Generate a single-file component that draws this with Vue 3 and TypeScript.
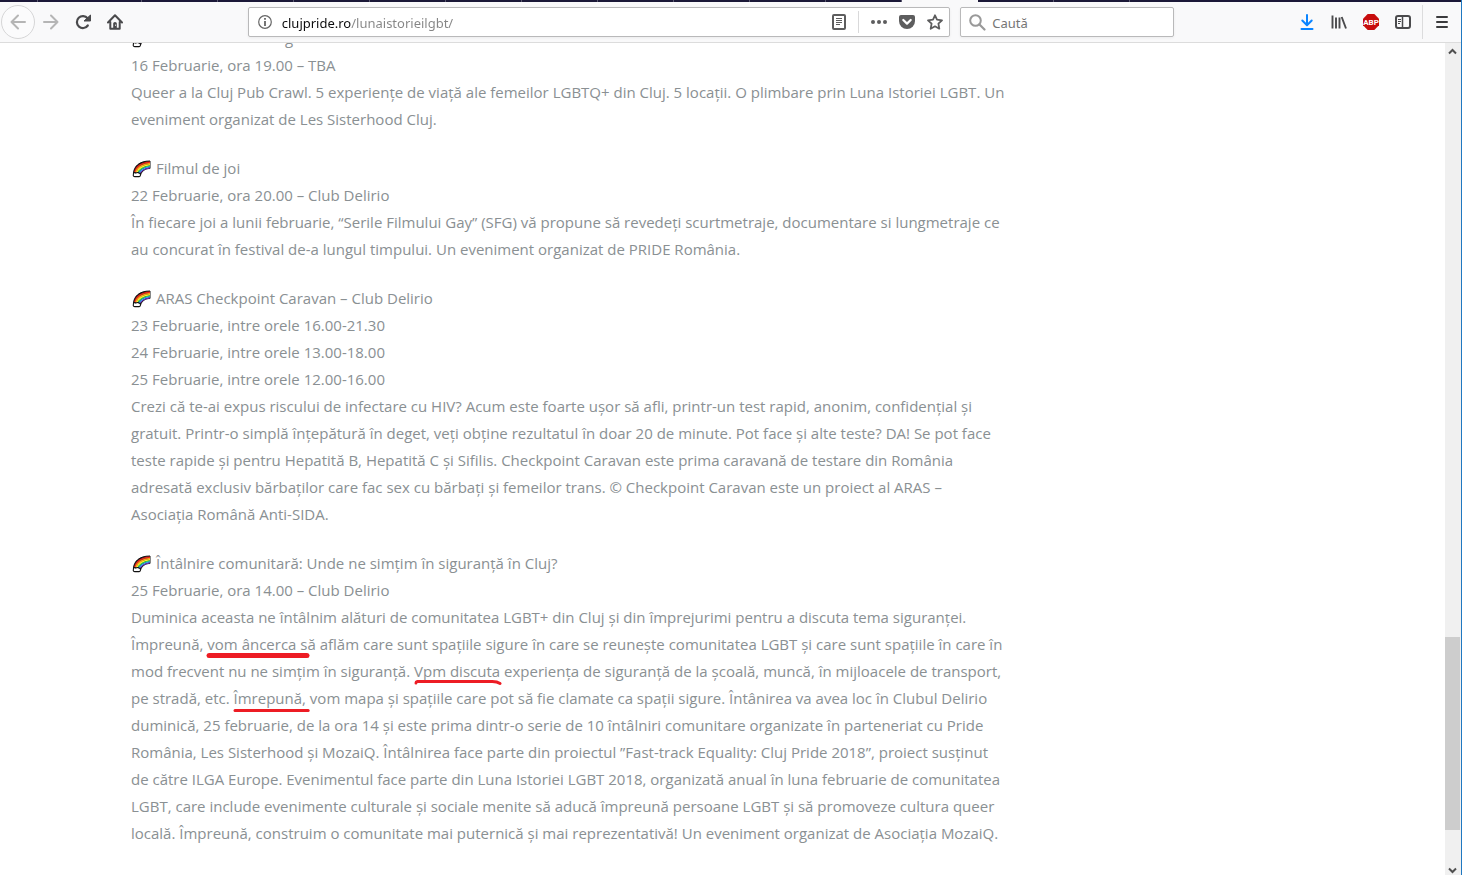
<script setup lang="ts">
import { ref } from 'vue'

interface Run {
  text: string
  mark?: 'thick' | 'hooked' | 'thin'
}
interface EventItem {
  title: string
  dates: string[]
  body: Run[]
}

const address = ref('clujpride.ro/lunaistorieilgbt/')
const query = ref('')
const tabs: number[] = Array.from({ length: 13 }, (_, i) => i)
const activeTab = 10

const events: EventItem[] = [
  {
    title: 'Filmul de joi',
    dates: ['22 Februarie, ora 20.00 – Club Delirio'],
    body: [
      {
        text: 'În fiecare joi a lunii februarie, “Serile Filmului Gay” (SFG) vă propune să revedeți scurtmetraje, documentare si lungmetraje ce au concurat în festival de-a lungul timpului. Un eveniment organizat de PRIDE România.',
      },
    ],
  },
  {
    title: 'ARAS Checkpoint Caravan – Club Delirio',
    dates: [
      '23 Februarie, intre orele 16.00-21.30',
      '24 Februarie, intre orele 13.00-18.00',
      '25 Februarie, intre orele 12.00-16.00',
    ],
    body: [
      {
        text: 'Crezi că te-ai expus riscului de infectare cu HIV? Acum este foarte ușor să afli, printr-un test rapid, anonim, confidențial și gratuit. Printr-o simplă înțepătură în deget, veți obține rezultatul în doar 20 de minute. Pot face și alte teste? DA! Se pot face teste rapide și pentru Hepatită B, Hepatită C și Sifilis. Checkpoint Caravan este prima caravană de testare din România adresată exclusiv bărbaților care fac sex cu bărbați și femeilor trans. © Checkpoint Caravan este un proiect al ARAS – Asociația Română Anti-SIDA.',
      },
    ],
  },
  {
    title: 'Întâlnire comunitară: Unde ne simțim în siguranță în Cluj?',
    dates: ['25 Februarie, ora 14.00 – Club Delirio'],
    body: [
      {
        text: 'Duminica aceasta ne întâlnim alături de comunitatea LGBT+ din Cluj și din împrejurimi pentru a discuta tema siguranței. Împreună, ',
      },
      { text: 'vom âncerca s', mark: 'thick' },
      {
        text: 'ă aflăm care sunt spațiile sigure în care se reunește comunitatea LGBT și care sunt spațiile în care în mod frecvent nu ne simțim în siguranță. ',
      },
      { text: 'Vpm discuta', mark: 'hooked' },
      { text: ' experiența de siguranță de la școală, muncă, în mijloacele de transport, pe stradă, etc. ' },
      { text: 'Îmrepună,', mark: 'thin' },
      {
        text: ' vom mapa și spațiile care pot să fie clamate ca spații sigure. Întânirea va avea loc în Clubul Delirio duminică, 25 februarie, de la ora 14 și este prima dintr-o serie de 10 întâlniri comunitare organizate în parteneriat cu Pride România, Les Sisterhood și MozaiQ. Întâlnirea face parte din proiectul ”Fast-track Equality: Cluj Pride 2018”, proiect susținut de către ILGA Europe. Evenimentul face parte din Luna Istoriei LGBT 2018, organizată anual în luna februarie de comunitatea LGBT, care include evenimente culturale și sociale menite să aducă împreună persoane LGBT și să promoveze cultura queer locală. Împreună, construim o comunitate mai puternică și mai reprezentativă! Un eveniment organizat de Asociația MozaiQ.',
      },
    ],
  },
]
</script>

<template>
  <div class="window">
    <svg class="defs" width="0" height="0" aria-hidden="true">
      <symbol id="rainbow" viewBox="0 0 20 18">
        <path d="M2.500 13C3 6.500 8 1 19 1V8.500C14 8.500 11 11 9.500 15Z" fill="#111" stroke="#111" stroke-width="1" />
        <path d="M3.800 12.500C5 7 10 2.400 19 2.200" fill="none" stroke="#e8231b" stroke-width="1.600" />
        <path d="M4.800 12.500C6 8 11 3.800 19 3.500" fill="none" stroke="#ff9a1a" stroke-width="1.500" />
        <path d="M5.800 12.700C7 9 12 5.200 19 4.700" fill="none" stroke="#fff02a" stroke-width="1.500" />
        <path d="M6.800 13C8 10 12.500 6.500 19 5.800" fill="none" stroke="#2fd05c" stroke-width="1.300" />
        <path d="M7.800 13.300C9 11 13 7.500 19 6.900" fill="none" stroke="#38a4ff" stroke-width="1.300" />
        <path d="M8.700 13.600C10 11.500 13.500 8.500 19 7.900" fill="none" stroke="#7b2fc8" stroke-width="1" />
        <path d="M2.400 14.400C2 12.800 4 12.200 4.800 13C6 12.200 8 12.600 8.400 13.300C10 13.400 9.800 16.600 8.200 16.600H4C2.500 16.600 1.900 15.600 2.400 14.400Z" fill="#fff" stroke="#111" stroke-width="1.100" />
      </symbol>
    </svg>

    <div class="tabstrip">
      <i class="tab first"></i>
      <i class="tab second"></i>
      <i v-for="t in tabs" :key="t" class="tab" :class="{ active: t === activeTab }"></i>
      <i class="tab rest"></i>
    </div>

    <header class="toolbar">
      <button class="tool back" aria-label="Înapoi">
        <svg width="16" height="16" viewBox="0 0 16 16"><path d="M15 8H1.500M8 1.500L1.500 8L8 14.500" fill="none" stroke="#b5b5b5" stroke-width="2" stroke-linecap="round" stroke-linejoin="round" /></svg>
      </button>
      <button class="tool" aria-label="Înainte">
        <svg width="16" height="16" viewBox="0 0 16 16"><path d="M1 8H14.500M8 1.500L14.500 8L8 14.500" fill="none" stroke="#b5b5b5" stroke-width="2" stroke-linecap="round" stroke-linejoin="round" /></svg>
      </button>
      <button class="tool" aria-label="Reîncarcă">
        <svg width="16" height="16" viewBox="0 0 16 16"><path d="M12.800 11.500A6 6 0 1 1 12.600 4.300" fill="none" stroke="#4a4a4c" stroke-width="2.200" stroke-linecap="round" /><path d="M15.500 1V7H9Z" fill="#4a4a4c" stroke="#4a4a4c" stroke-linejoin="round" /></svg>
      </button>
      <button class="tool" aria-label="Acasă">
        <svg width="16" height="16" viewBox="0 0 16 16"><path d="M1 8.500L8 1.300L15 8.500M3.300 8V14.800H12.700V8" fill="none" stroke="#4a4a4c" stroke-width="2" stroke-linecap="round" stroke-linejoin="round" /><path d="M6.200 14V9.500Q6.200 8 8 8T9.800 9.500V14Z" fill="#4a4a4c" /><path d="M8.300 10.500H9V12H8.300Z" fill="#fff" /></svg>
      </button>
      <span class="spacer"></span>

      <div class="field url">
        <button class="mini info" aria-label="Informații despre site">
          <svg width="14" height="14" viewBox="0 0 14 14"><circle cx="7" cy="7" r="6.300" fill="none" stroke="#666" stroke-width="1.200" /><path d="M6.100 3H7.900V4.800H6.100ZM6.100 6H7.900V11H6.100Z" fill="#666" /></svg>
        </button>
        <input v-model="address" class="address" type="text" aria-label="Adresă" spellcheck="false" />
        <button class="mini reader" aria-label="Mod citire">
          <svg width="14" height="16" viewBox="0 0 14 16"><rect x="1" y="1" width="12" height="14" rx="1" fill="none" stroke="#5d5d5e" stroke-width="2" /><path d="M4 4.500H10M4 6.500H10M4 8.500H10M4 10.500H8" stroke="#5d5d5e" stroke-width="1" /></svg>
        </button>
        <span class="rule"></span>
        <button class="mini" aria-label="Acțiuni pagină">
          <svg width="16" height="4" viewBox="0 0 16 4"><g fill="#5d5d5e"><circle cx="2" cy="2" r="2" /><circle cx="8" cy="2" r="2" /><circle cx="14" cy="2" r="2" /></g></svg>
        </button>
        <button class="mini" aria-label="Salvează în Pocket">
          <svg width="16" height="14" viewBox="0 0 16 14"><path d="M2 0H14Q16 0 16 2V6A8 8 0 0 1 0 6V2Q0 0 2 0Z" fill="#5d5d5e" /><path d="M4.300 5L8 8.600L11.700 5" fill="none" stroke="#fff" stroke-width="2.200" stroke-linecap="round" stroke-linejoin="round" /></svg>
        </button>
        <button class="mini" aria-label="Adaugă semn de carte">
          <svg width="16" height="16" viewBox="0 0 16 16"><path d="M8 1.300L10 5.700L15 6.300L11.400 9.700L12.300 14.700L8 12.300L3.700 14.700L4.600 9.700L1 6.300L6 5.700Z" fill="none" stroke="#5d5d5e" stroke-width="1.800" stroke-linejoin="round" /></svg>
        </button>
      </div>

      <label class="field search">
        <svg width="17" height="17" viewBox="0 0 17 17"><circle cx="6.500" cy="6.500" r="5.300" fill="none" stroke="#999" stroke-width="2" /><path d="M10.500 10.500L15.500 15.500" stroke="#999" stroke-width="2.200" stroke-linecap="round" /></svg>
        <input v-model="query" type="text" placeholder="Caută" aria-label="Caută" />
      </label>
      <span class="spacer"></span>

      <button class="tool" aria-label="Descărcări">
        <svg width="14" height="16" viewBox="0 0 14 16"><path d="M7 1V11M2.300 6.500L7 11.200L11.700 6.500M1.500 15H12.500" fill="none" stroke="#0a84ff" stroke-width="2" stroke-linecap="round" stroke-linejoin="round" /></svg>
      </button>
      <button class="tool" aria-label="Bibliotecă">
        <svg width="16" height="16" viewBox="0 0 16 16"><path d="M1.500 1.500V14.500M5 3.500V14.500M8.500 3.500V14.500M10.700 3L15 14.500" fill="none" stroke="#4a4a4c" stroke-width="1.900" /></svg>
      </button>
      <button class="tool" aria-label="Adblock Plus">
        <svg width="16" height="16" viewBox="0 0 16 16"><path d="M4.700 0H11.300L16 4.700V11.300L11.300 16H4.700L0 11.300V4.700Z" fill="#c70d0d" /><text x="8" y="11" text-anchor="middle" class="abp">ABP</text></svg>
      </button>
      <button class="tool" aria-label="Bară laterală">
        <svg width="16" height="14" viewBox="0 0 16 14"><rect x="1" y="1" width="14" height="12" rx="2" fill="none" stroke="#4a4a4c" stroke-width="2" /><path d="M7.500 1V13" stroke="#4a4a4c" stroke-width="1.500" /><path d="M3 4.500H6M3 6.500H6M3 8.500H5" stroke="#4a4a4c" stroke-width="1" /></svg>
      </button>
      <span class="divider"></span>
      <button class="tool menu" aria-label="Meniu">
        <svg width="12" height="12" viewBox="0 0 12 12"><path d="M1 1H11M1 6H11M1 11H11" stroke="#3b3b3d" stroke-width="2" stroke-linecap="round" /></svg>
      </button>
    </header>

    <div class="viewport">
      <main class="page">
        <section class="event">
          <h3 class="cut">
            <svg class="bow" width="20" height="18"><use href="#rainbow" /></svg>
            <span class="tail">g</span>
          </h3>
          <p>16 Februarie, ora 19.00 – TBA</p>
          <p>Queer a la Cluj Pub Crawl. 5 experiențe de viață ale femeilor LGBTQ+ din Cluj. 5 locații. O plimbare prin Luna Istoriei LGBT. Un eveniment organizat de Les Sisterhood Cluj.</p>
        </section>

        <section v-for="e in events" :key="e.title" class="event">
          <h3>
            <svg class="bow" width="20" height="18"><use href="#rainbow" /></svg>
            <span>{{ e.title }}</span>
          </h3>
          <p v-for="d in e.dates" :key="d">{{ d }}</p>
          <p>
            <template v-for="(r, i) in e.body" :key="i"><span v-if="r.mark" class="marked">{{ r.text }}<svg v-if="r.mark === 'thick'" class="stroke" viewBox="0 0 104 8" preserveAspectRatio="none"><path d="M2 3.500H104" stroke-width="5" /></svg><svg v-else-if="r.mark === 'hooked'" class="stroke" viewBox="0 0 88 8" preserveAspectRatio="none"><path d="M2 4C2 2 5 2.500 9 2.500H80Q85 2.500 88 4.500" stroke-width="3" /></svg><svg v-else class="stroke" viewBox="0 0 78 8" preserveAspectRatio="none"><path d="M1 4.500H80" stroke-width="3" /></svg></span><template v-else>{{ r.text }}</template></template>
          </p>
        </section>
      </main>

      <div class="scrollbar">
        <button aria-label="Derulează în sus">
          <svg width="9" height="7" viewBox="0 0 9 7"><path d="M1 5.500L4.500 2L8 5.500" fill="none" stroke="#505050" stroke-width="2" /></svg>
        </button>
        <div class="track"><div class="thumb"></div></div>
        <button class="down" aria-label="Derulează în jos">
          <svg width="9" height="7" viewBox="0 0 9 7"><path d="M1 1.500L4.500 5L8 1.500" fill="none" stroke="#505050" stroke-width="2" /></svg>
        </button>
      </div>
    </div>
  </div>
</template>

<style>
body {
  margin: 0;
}
</style>

<style scoped>
.window {
  box-sizing: border-box;
  height: 100vh;
  display: flex;
  flex-direction: column;
  overflow: hidden;
  border-right: 1px solid #1f78c1;
  background: #fff;
  font-family: "Open Sans", "Noto Sans", sans-serif;
}
.defs {
  position: absolute;
}
button {
  display: flex;
  align-items: center;
  justify-content: center;
  padding: 0;
  border: 0;
  background: none;
}
.tabstrip {
  flex: none;
  display: flex;
  height: 2px;
  background: #1b1838;
}
.tab {
  box-sizing: border-box;
  flex: 0 1 76px;
  border-right: 1px solid #5b5970;
}
.tab.first {
  flex-basis: 38px;
}
.tab.second {
  flex-basis: 104px;
}
.tab.active {
  background: #f9f9fa;
  border-color: #f9f9fa;
}
.tab.rest {
  flex: 1;
  border: 0;
}
.toolbar {
  flex: none;
  display: flex;
  align-items: center;
  height: 40px;
  background: #f9f9fa;
  border-bottom: 1px solid #dcdcdc;
}
.tool {
  flex: none;
  width: 32px;
  height: 32px;
}
.back {
  box-sizing: border-box;
  width: 34px;
  height: 34px;
  margin-left: 1px;
  border: 1px solid #d6d6d7;
  border-radius: 50%;
  background: #fbfbfc;
}
.spacer {
  flex: 1 1 0;
}
.field {
  box-sizing: border-box;
  display: flex;
  align-items: center;
  min-width: 0;
  height: 30px;
  border: 1px solid #b9b9ba;
  border-radius: 2px;
  background: #fff;
  box-shadow: 0 1px 3px rgba(0, 0, 0, 0.06);
}
.field input {
  flex: 1;
  min-width: 0;
  height: 26px;
  padding: 2px 0 0;
  border: 0;
  outline: 0;
  background-color: transparent;
  font-family: "Noto Sans", "Open Sans", sans-serif;
  font-size: 13px;
}
.url {
  flex: 6 1 0;
}
.url .address {
  background-image: linear-gradient(90deg, #0c0c0d 69px, #858585 69px);
  -webkit-background-clip: text;
  background-clip: text;
  color: transparent;
}
.mini {
  flex: none;
  width: 28px;
  height: 28px;
}
.info {
  width: 33px;
}
.reader {
  width: 38px;
}
.rule {
  width: 1px;
  height: 22px;
  margin-right: 6px;
  background: #d9d9da;
}
.search {
  flex: none;
  width: 214px;
  margin-left: 10px;
  padding-left: 8px;
  gap: 6px;
}
.search input::placeholder {
  color: #757575;
  opacity: 1;
}
.abp {
  fill: #fff;
  font-family: Roboto, "Liberation Sans", sans-serif;
  font-size: 8px;
  font-weight: 700;
}
.divider {
  width: 1px;
  height: 34px;
  margin-left: 3px;
  background: #dcdcdd;
}
.menu {
  width: 38px;
}
.viewport {
  flex: 1;
  min-height: 0;
  display: flex;
}
.page {
  flex: 1;
  min-width: 0;
  overflow: hidden;
  padding: 0 131px;
  color: #8a9093;
  font-size: 15px;
  line-height: 27px;
}
.event {
  max-width: 877px;
  margin-bottom: 22px;
}
.event:first-child {
  margin-top: -18px;
}
.event h3 {
  display: flex;
  align-items: center;
  gap: 5px;
  height: 27px;
  margin: 0;
  font-size: 15px;
  font-weight: 400;
}
.event p {
  margin: 0;
}
.bow {
  flex: none;
}
.tail {
  margin-left: 129px;
}
.marked {
  position: relative;
  white-space: nowrap;
}
.stroke {
  position: absolute;
  left: 0;
  top: 18px;
  width: 100%;
  height: 8px;
  overflow: visible;
  fill: none;
  stroke: #ed1c24;
  stroke-linecap: round;
}
.scrollbar {
  flex: none;
  display: flex;
  flex-direction: column;
  width: 16px;
  background: #f0f0f0;
}
.scrollbar button {
  width: 15px;
  height: 17px;
}
.scrollbar .down {
  height: 9px;
}
.track {
  flex: 1;
  display: flex;
  flex-direction: column;
  justify-content: flex-end;
}
.thumb {
  width: 15px;
  height: 24%;
  margin-bottom: 36px;
  background: #cdcdcd;
}
</style>
